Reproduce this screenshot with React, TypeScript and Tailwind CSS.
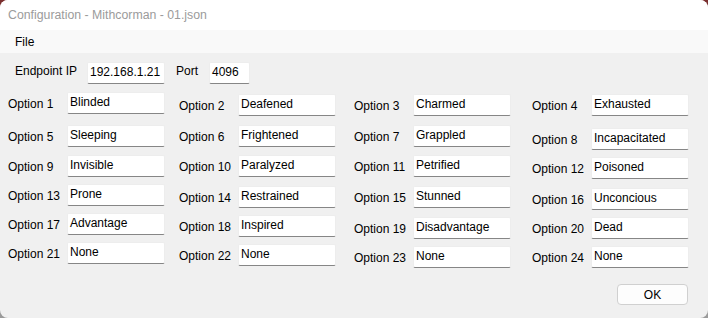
type Cell = { label: string; value: string; mt: string };

const columns: { ml: string; cells: Cell[] }[] = [
  {
    ml: "ml-[8px]",
    cells: [
      { label: "Option 1", value: "Blinded", mt: "mt-[8px]" },
      { label: "Option 5", value: "Sleeping", mt: "mt-[11px]" },
      { label: "Option 9", value: "Invisible", mt: "mt-[8px]" },
      { label: "Option 13", value: "Prone", mt: "mt-[7px]" },
      { label: "Option 17", value: "Advantage", mt: "mt-[7px]" },
      { label: "Option 21", value: "None", mt: "mt-[7px]" },
    ],
  },
  {
    ml: "ml-[14px]",
    cells: [
      { label: "Option 2", value: "Deafened", mt: "mt-[10px]" },
      { label: "Option 6", value: "Frightened", mt: "mt-[9px]" },
      { label: "Option 10", value: "Paralyzed", mt: "mt-[8px]" },
      { label: "Option 14", value: "Restrained", mt: "mt-[9px]" },
      { label: "Option 18", value: "Inspired", mt: "mt-[7px]" },
      { label: "Option 22", value: "None", mt: "mt-[7px]" },
    ],
  },
  {
    ml: "ml-[18px]",
    cells: [
      { label: "Option 3", value: "Charmed", mt: "mt-[10px]" },
      { label: "Option 7", value: "Grappled", mt: "mt-[9px]" },
      { label: "Option 11", value: "Petrified", mt: "mt-[8px]" },
      { label: "Option 15", value: "Stunned", mt: "mt-[9px]" },
      { label: "Option 19", value: "Disadvantage", mt: "mt-[9px]" },
      { label: "Option 23", value: "None", mt: "mt-[7px]" },
    ],
  },
  {
    ml: "ml-[21px]",
    cells: [
      { label: "Option 4", value: "Exhausted", mt: "mt-[10px]" },
      { label: "Option 8", value: "Incapacitated", mt: "mt-[12px]" },
      { label: "Option 12", value: "Poisoned", mt: "mt-[7px]" },
      { label: "Option 16", value: "Unconcious", mt: "mt-[9px]" },
      { label: "Option 20", value: "Dead", mt: "mt-[7px]" },
      { label: "Option 24", value: "None", mt: "mt-[7px]" },
    ],
  },
];

function TextBox({ value, width }: { value: string; width: string }) {
  return (
    <div
      className={`${width} h-[22px] shrink-0 bg-white border border-[#ededed] border-b-[#868686] rounded-[2px] pl-[2px] pt-[1px] leading-[16px] text-black whitespace-nowrap overflow-hidden`}
    >
      {value}
    </div>
  );
}

export default function App() {
  return (
    <div className="w-[708px] h-[318px] bg-gradient-to-b from-[#7a2e2e] via-[#9a9a9a] to-[#9a9a9a] overflow-hidden">
      <div
        className="h-full rounded-[8px] overflow-hidden bg-[#f0f0f0] flex flex-col text-[12px] text-black"
        style={{ fontFamily: '"Liberation Sans", Arial, sans-serif' }}
      >
        <div className="h-[30px] shrink-0 bg-white flex items-center pl-[8px] text-[12.3px] text-[#9b9b9b]">
          Configuration - Mithcorman - 01.json
        </div>

        <div className="h-[23px] shrink-0 bg-[#f9f9f9] flex items-center pl-[15px] pt-[1px]">
          File
        </div>

        <div className="flex-1 flex flex-col pt-[9px]">
          <div className="flex items-start pl-[15px]">
            <div className="w-[72px] pt-[1px] leading-[16px]">Endpoint IP</div>
            <TextBox value="192.168.1.21" width="w-[78px]" />
            <div className="ml-[11px] w-[33px] pt-[1px] leading-[16px]">Port</div>
            <TextBox value="4096" width="w-[41px]" />
          </div>

          <div className="flex items-start">
            {columns.map((col, i) => (
              <div key={i} className={`${col.ml} w-[157px] flex flex-col`}>
                {col.cells.map((c) => (
                  <div key={c.label} className={`${c.mt} flex items-start`}>
                    <div className="w-[59px] shrink-0 pt-[4px] leading-[16px] whitespace-nowrap">
                      {c.label}
                    </div>
                    <TextBox value={c.value} width="w-[98px]" />
                  </div>
                ))}
              </div>
            ))}
          </div>

          <div className="flex justify-end pr-[20px] mt-[16px]">
            <button className="w-[71px] h-[21px] bg-[#fdfdfd] border border-[#d0d0d0] rounded-[4px] text-[12px] leading-[18px] text-black">
              OK
            </button>
          </div>
        </div>
      </div>
    </div>
  );
}
